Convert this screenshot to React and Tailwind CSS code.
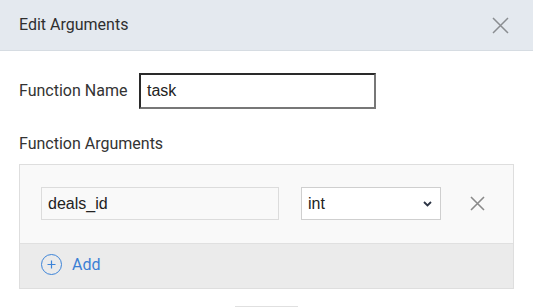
export default function App() {
  return (
    <div
      className="w-[533px] h-[307px] overflow-hidden bg-white text-[#333]"
      style={{ fontFamily: "Roboto, 'Liberation Sans', sans-serif" }}
    >
      <div className="h-[51px] bg-[#e4e9ef] border-b border-[#d6dce2] flex items-center justify-between pl-[19px] pr-[24px]">
        <span className="text-[16px] text-[#2f2f2f]">Edit Arguments</span>
        <svg width="17" height="17" viewBox="0 0 17 17" className="text-[#8a8d91]">
          <path d="M1 1L16 16M16 1L1 16" stroke="currentColor" strokeWidth="1.5" fill="none" />
        </svg>
      </div>

      <div className="px-[19px]">
        <div className="mt-[22px] flex items-center">
          <span className="w-[120px] text-[16px]">Function Name</span>
          <div
            className="w-[237px] h-[36px] border-2 border-t-[#2a2a2a] border-l-[#2a2a2a] border-r-[#777] border-b-[#777] flex items-center px-[6px] text-[16px] text-[#222]"
            style={{ fontFamily: "'Liberation Sans', Arial, sans-serif" }}
          >
            task
          </div>
        </div>

        <div className="mt-[26px] text-[16px] leading-[18px]">Function Arguments</div>

        <div className="mt-[11px] w-[495px] border border-[#dedede]">
          <div
            className="h-[78px] bg-[#f9f9f9] flex items-start pl-[21px] pt-[22px] text-[16px] text-[#222]"
            style={{ fontFamily: "'Liberation Sans', Arial, sans-serif" }}
          >
            <div className="w-[238px] h-[33px] border border-[#dcdcdc] bg-[#f9f9f9] flex items-center px-[6px]">
              deals_id
            </div>
            <div className="ml-[22px] w-[140px] h-[33px] border border-[#cfcfcf] bg-white flex items-center justify-between pl-[6px] pr-[8px]">
              <span>int</span>
              <svg width="9" height="6" viewBox="0 0 9 6">
                <path d="M1 1L4.5 4.5L8 1" stroke="#2c3444" strokeWidth="1.8" fill="none" />
              </svg>
            </div>
            <svg width="15" height="15" viewBox="0 0 15 15" className="ml-[29px] mt-[9px] text-[#8a8a8a]">
              <path d="M1 1L14 14M14 1L1 14" stroke="currentColor" strokeWidth="1.6" fill="none" />
            </svg>
          </div>
          <div className="h-[45px] bg-[#ebebeb] border-t border-[#e0e0e0] flex items-center pl-[21px] pb-[3px]">
            <div className="w-[21px] h-[21px] rounded-full border border-[#3d84d8] flex items-center justify-center text-[#3d84d8]">
              <svg width="9" height="9" viewBox="0 0 9 9">
                <path d="M4.5 0.5V8.5M0.5 4.5H8.5" stroke="currentColor" strokeWidth="1.2" fill="none" />
              </svg>
            </div>
            <span className="ml-[10px] text-[16px] text-[#3a7fd5]">Add</span>
          </div>
        </div>

        <div className="mt-[17px] flex justify-center">
          <div className="w-[63px] h-[30px] bg-[#e8e8e8] border-t border-[#e0e0e0]" />
        </div>
      </div>
    </div>
  );
}
